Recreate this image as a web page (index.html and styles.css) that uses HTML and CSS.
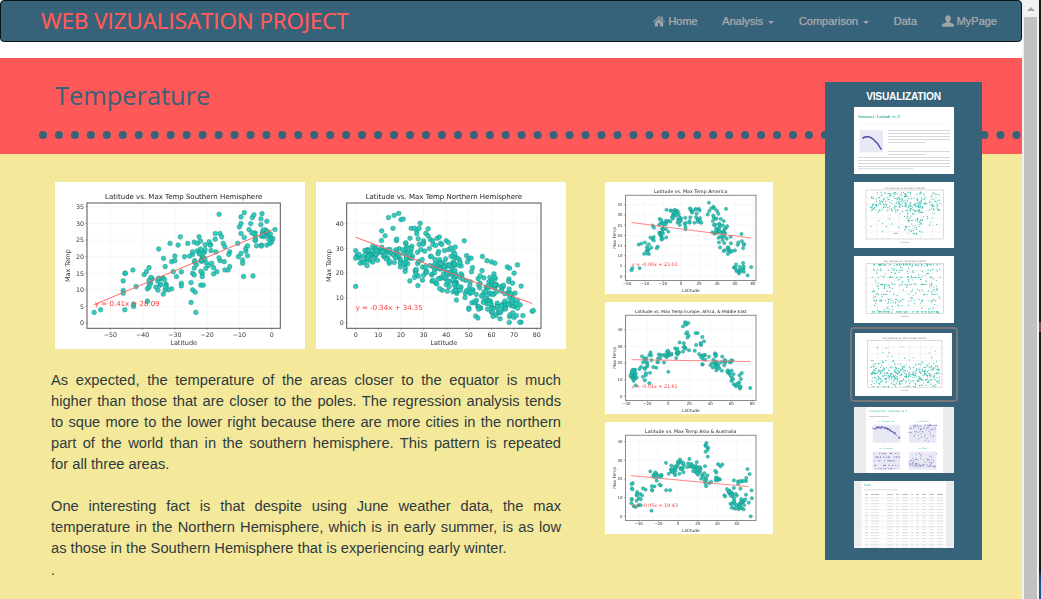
FILE: index.html
```html
<!DOCTYPE html>
<html lang="en">
<head>
<meta charset="utf-8">
<title>Temperature</title>
<link rel="stylesheet" href="styles.css">
</head>
<body>
<div class="page">
  <nav class="navbar">
    <a class="brand">WEB VIZUALISATION PROJECT</a>
    <ul class="nav-links">
      <li><svg class="nav-icon" viewBox="0 0 12 12"><path d="M6 1 0 6.6l.7.7L6 2.5l5.300 4.800.7-.7L9.700 4.500V1.600H8.300v1.600zM1.800 7.400V11.600h3.200V8.300h2v3.300h3.200V7.400L6 3.600z"/></svg>Home</li>
      <li>Analysis<span class="caret"></span></li>
      <li>Comparison<span class="caret"></span></li>
      <li>Data</li>
      <li><svg class="nav-icon" viewBox="0 0 12 12"><path d="M6 .3c-1.700 0-2.800 1.300-2.800 3.100 0 1.200.5 2.300 1.300 2.900v1L.8 8.800C.3 9 0 9.400 0 10v1.700h12V10c0-.6-.3-1-.8-1.200L7.500 7.300v-1c.8-.6 1.300-1.700 1.300-2.900C8.800 1.600 7.700.3 6 .3z"/></svg>MyPage</li>
    </ul>
  </nav>

  <header class="banner">
    <h1 class="banner-title">Temperature</h1>
    <hr class="dots">
  </header>

  <main class="content">
    <section class="left-col">
      <div class="chart-row">
        <div class="chart chart-big" data-chart="south"></div>
        <div class="chart chart-big" data-chart="north"></div>
      </div>
      <div class="copy">
        <p>As expected, the temperature of the areas closer to the equator is much higher than those that are closer to the poles. The regression analysis tends to sque more to the lower right because there are more cities in the northern part of the world than in the southern hemisphere. This pattern is repeated for&nbsp;all three areas.</p>
        <p>One interesting fact is that despite using June weather data, the max temperature in the Northern Hemisphere, which is in early summer, is as low as those in the Southern Hemisphere that is experiencing early winter.</p>
        <p class="stray">.</p>
      </div>
    </section>
    <section class="right-col">
      <div class="chart chart-small" data-chart="america"></div>
      <div class="chart chart-small" data-chart="europe"></div>
      <div class="chart chart-small" data-chart="asia"></div>
    </section>
  </main>

  <aside class="sidebar">
    <h2 class="sidebar-title">VISUALIZATION</h2>
    <div class="thumb" data-thumb="summary"></div>
    <div class="thumb" data-thumb="humidity"></div>
    <div class="thumb" data-thumb="cloud"></div>
    <div class="thumb thumb-active" data-thumb="wind"></div>
    <div class="thumb" data-thumb="compare"></div>
    <div class="thumb" data-thumb="table"></div>
  </aside>
</div>
<div class="scrollbar">
  <div class="track">
    <div class="arrow-box"><span class="arrow"></span></div>
    <div class="thumb-bar"></div>
  </div>
  <div class="behind"></div>
</div>
<script src="script.js"></script>
</body>
</html>
```

FILE: styles.css
```css
* { box-sizing: border-box; }
html, body { margin: 0; height: 599px; overflow: hidden; }
body {
  display: flex;
  background: #fff;
  font-family: "Liberation Sans", Arial, sans-serif;
  font-size: 14px;
  color: #333;
}
.page {
  position: relative;
  width: 1022px;
  height: 599px;
  display: flex;
  flex-direction: column;
}
.navbar {
  height: 42px;
  flex: none;
  display: flex;
  justify-content: space-between;
  align-items: center;
  background: #36627a;
  border: 1px solid #0c1418;
  border-radius: 4px;
  margin-bottom: 16px;
  padding: 0 24px 0 40px;
}
.brand {
  font-family: "Open Sans", sans-serif;
  font-size: 22.3px;
  color: #ff5a5a;
  text-shadow: 0 0 .5px #ff5a5a;
  position: relative;
  top: -1px;
}
.nav-links {
  list-style: none;
  display: flex;
  gap: 24.6px;
  margin: 0;
  padding: 0;
  font-size: 11px;
  color: #9fa5a9;
  text-shadow: 0 0 .7px #9fa5a9;
}
.nav-links li { display: flex; align-items: center; }
.nav-icon { width: 12px; height: 12px; margin-right: 3px; fill: #9fa5a9; }
.caret {
  width: 0;
  height: 0;
  margin-left: 5px;
  margin-top: 2px;
  border-top: 3px solid #9fa5a9;
  border-left: 3px solid transparent;
  border-right: 3px solid transparent;
}
.banner {
  height: 96px;
  flex: none;
  background: #ff5858;
  display: flex;
  flex-direction: column;
  padding-top: 19px;
}
.banner-title {
  margin: 0 0 0 55px;
  font-family: "Open Sans", sans-serif;
  font-weight: 400;
  font-size: 25.4px;
  line-height: 36px;
  color: #36627a;
}
.dots {
  margin: 18px 1px 0 39px;
  height: 0;
  border: 0;
  border-top: 8px dotted #36627a;
}
.content {
  flex: 1;
  background: #f4e99b;
  display: flex;
  padding: 28px 0 0 51px;
}
.left-col { width: 510px; }
.chart-row { display: flex; gap: 11px; margin-left: 4px; }
.chart { background: #fff; flex: none; }
.chart svg { display: block; }
.chart-big svg { filter: blur(.55px); }
.chart-small svg { filter: blur(.7px); }
.thumb svg { display: block; filter: blur(.45px); }
.chart-big { width: 250px; height: 167px; }
.chart-small { width: 168px; height: 112px; }
.copy { margin-top: 21px; }
.copy p {
  margin: 0 0 21px;
  font-size: 14.7px;
  line-height: 21px;
  text-align: justify;
  color: #2f3a40;
}
.copy .stray { margin: -21px 0 0; position: relative; top: 1px; }
.right-col {
  margin-left: 44px;
  display: flex;
  flex-direction: column;
  gap: 8px;
}
.sidebar {
  position: absolute;
  left: 825px;
  top: 82px;
  width: 157px;
  height: 478px;
  background: #36627a;
  display: flex;
  flex-direction: column;
  align-items: center;
  gap: 8px;
  padding-top: 25px;
}
.sidebar-title {
  position: absolute;
  top: 8px;
  left: 0;
  right: 0;
  margin: 0;
  text-align: center;
  font-size: 10.2px;
  letter-spacing: -.2px;
  line-height: 13px;
  font-weight: 700;
  color: #fff;
}
.thumb { width: 100px; height: 66.5px; background: #fff; flex: none; }
.thumb-active {
  width: 108px;
  height: 75px;
  margin: -4px 0 -3px;
  padding: 4px 3.500px;
  background: transparent;
  border: 2px solid #777;
  border-radius: 4px;
}
.thumb-active svg { background: #fff; }
.scrollbar { width: 19px; height: 599px; display: flex; flex: none; }
.track {
  width: 17px;
  background: #f1f1f1;
  display: flex;
  flex-direction: column;
  align-items: center;
}
.arrow-box { height: 17px; width: 100%; display: flex; justify-content: center; align-items: center; }
.arrow {
  width: 0;
  height: 0;
  border-bottom: 4px solid #a3a3a3;
  border-left: 4px solid transparent;
  border-right: 4px solid transparent;
}
.thumb-bar { width: 13px; flex: 1; background: #c1c1c1; }
.behind {
  width: 2px;
  background: linear-gradient(#1a1a1a 322px, #7a4a50 322px, #7a4a50 332px, #1a1a1a 332px, #1a1a1a 570px, #17568c 580px);
}
```

FILE: script.js
```js
(function () {
  var NS = 'http://www.w3.org/2000/svg';

  function rng(seed) {
    return function () {
      seed |= 0; seed = seed + 0x6D2B79F5 | 0;
      var t = Math.imul(seed ^ seed >>> 15, 1 | seed);
      t = t + Math.imul(t ^ t >>> 7, 61 | t) ^ t;
      return ((t ^ t >>> 14) >>> 0) / 4294967296;
    };
  }
  function gauss(r) { return (r() + r() + r() + r() - 2) * 1.7; }
  function el(parent, name, attrs, text) {
    var n = document.createElementNS(NS, name);
    for (var k in attrs) n.setAttribute(k, attrs[k]);
    if (text != null) n.textContent = text;
    parent.appendChild(n);
    return n;
  }
  function svg(host, w, h) {
    var s = el(host, 'svg', { width: w, height: h, viewBox: '0 0 ' + w + ' ' + h });
    return s;
  }
  function expand(points, clusters, seed) {
    var r = rng(seed), out = points.slice();
    clusters.forEach(function (c) {
      for (var i = 0; i < c[4]; i++) out.push([c[0] + gauss(r) * c[2], c[1] + gauss(r) * c[3]]);
    });
    return out;
  }

  var BIG = { w: 250, h: 167, r: 2.35, spine: '#555', sw: 1, tick: 6.3, lab: 6.5, ttl: 7, eqf: 7,
    titleY: 16.5, tickY: 155, labelY: 162.5, ylabX: 13, box: [32, 21, 225.300, 146.300] };
  var SMALL = { w: 168, h: 112, r: 1.65, spine: '#8a8a8a', sw: 1, tick: 3.9, lab: 4.3, ttl: 4.7, eqf: 4.8,
    titleY: 11.3, tickY: 103.300, labelY: 109.800, ylabX: 9.500, box: [20.500, 13.300, 151, 98.500] };

  var charts = {
    south: { base: BIG, title: 'Latitude vs. Max Temp Southern Hemisphere', x0: 216.700, xk: 3.228, y0: 141, yk: 3.314,
      xt: [-50, -40, -30, -20, -10, 0], yt: [0, 5, 10, 15, 20, 25, 30, 35],
      line: [[-55, 5.5], [0, 28.1]], eq: 'y = 0.41x + 28.09', eqx: 40, eqy: 123.700, seed: 11,
      pts: [[-55,3.2],[-53,4],[-46,12.7],[-46,9.8],[-46,9],[-45.5,15],[-45.3,15],[-45.5,4],[-43,16],[-42.8,5],[-42.8,5.7],[-42,11],[-39.5,14.6],[-38.8,15.5],[-38,16.7],[-38.5,10.3],[-38,10.8],[-37.5,12],[-38.5,6.6],[-37,13.3],[-35,22.3],[-33.5,19.5],[-33,17],[-31.5,24],[-31,18.5],[-30,18.8],[-30,20.2],[-29,23.5],[-28.3,26],[-28,15.4],[-28,12],[-28,11.2],[-29.5,14],[-30.5,15.5],[-27,20],[-26,24],[-24.5,20.7],[-25,12.2],[-24.5,15],[-24,14.5],[-24.5,10],[-23.7,9.3],[-25,6.2],[-23.5,3.2],[-22,11.4],[-21.2,11.4],[-21.5,15],[-21.5,14],[-18,14.8],[-17,15.5],[-18,16.7],[-16.3,32.8],[-17.5,27],[-16,27],[-15.5,26],[-17.5,25.3],[-16,18.8],[-14.7,18.5],[-14.5,16],[-13.5,16],[-13,17],[-13,21.5],[-13.3,20.7],[-10.5,24],[-10.3,20],[-9.5,21],[-9.5,27],[-10,29],[-9.5,30],[-9.5,32],[-8.5,33.3],[-9,19],[-9,18],[-8.7,14],[-8,21.7],[-8.5,25.800],[-8,22.5],[-7.5,23.3],[-7.5,20.3],[-7,28.2],[-6.5,30],[-6,31.8],[-5.5,32.6],[-5.8,14.2],[-3,33],[-5,26],[-5,25],[-4.7,23.3],[-3.2,23.5],[-3.2,23.2],[-1.5,30.7],[-1.5,23.5],[-0.5,24],[0,24.5],[-33,10],[-32,10],[-31,10.300],[-24,24.4],[-23,24],[-22.5,26],[-15,24],[-14.500,23]],
      clusters: [[-2.5,27.5,2,1.6,24],[-20.5,21,2,2,28],[-34.5,12.5,1.3,1.3,16],[-21,17,1.5,.8,5]] },
    north: { base: BIG, title: 'Latitude vs. Max Temp Northern Hemisphere', x0: 39.700, xk: 2.263, y0: 141, yk: 2.492,
      xt: [0, 10, 20, 30, 40, 50, 60, 70, 80], yt: [0, 10, 20, 30, 40], box: [30.700, 21, 225, 146.300],
      line: [[0, 34.4], [78, 7.8]], eq: 'y = -0.34x + 34.35', eqx: 39.700, eqy: 128, seed: 23,
      pts: [[0,14.7],[0,29],[0.5,27],[1,26.5],[2,24],[2,26],[5,23],[14.5,42.3],[17,43.2],[19,44],[20,41.5],[21,41.7],[16.5,38],[11.5,37],[13,35],[24.5,38],[26,38],[27,37],[28,38],[27,35.8],[28.5,40],[30,33],[30,32],[31,36],[32,35],[32,37.8],[33,33.5],[34,33],[36,34],[37,34.500],[37.5,32],[38,31.5],[40,33],[41,32.3],[44,30.5],[48,33],[49,27],[50,26],[51,26],[56,26.700],[58,25],[60,24.5],[61.5,24],[67,22.5],[68,22],[70,20],[71.5,23.300],[73,0.3],[72.5,0.3],[78,4.7],[78.5,5],[50,6],[50,5.5],[53,2.8],[54,2],[44.5,9.2],[43,12.5],[27.5,15],[29.5,17.2],[26,18.3],[26.5,20.5],[31,20.5],[18,33],[24,34],[22,32],[60,4.5],[62,3],[64,4.200],[68,2.500],[70,2.200],[71,3],[58,9],[60,6.500],[55,6],[53,8],[54,6.500]],
      clusters: [[6,27.5,3,1.8,32],[12,29,3.5,2,20],[20,27,4,3,34],[25,26,4,4,16],[35,23,5,3.5,26],[40,22,3.500,4,32],[44,22,3.500,4,24],[48,18,4.500,4,30],[55,14,5,4,28],[60,12,5,5,24],[66,7,3.500,3.200,34],[70,7,2.5,3,12],[63,16,3.500,2,12],[34,19,3,2,10]] },
    america: { base: SMALL, title: 'Latitude vs. Max Temp America', x0: 76, xk: 0.9, y0: 94.300, yk: 2.046,
      xt: [-60, -40, -20, 0, 20, 40, 60, 80], yt: [0, 5, 10, 15, 20, 25, 30, 35],
      line: [[-55, 26.3], [78, 18.7]], eq: 'y = -0.06x + 23.03', eqx: 26.700, eqy: 83.500, seed: 37,
      pts: [[-55,3],[-54,4],[-46,4],[-47,15.5],[-44,16],[-41,11],[-40,16.5],[-36,13],[-33,14],[-16,32.500],[78,4.5],[74,0.5],[69,6.5],[31,36],[36,34],[40,32],[50,33]],
      clusters: [[-38,13,2.5,2,7],[-26,20,4,2.5,16],[-18,24,3,2.5,14],[-22,25.5,3,1.5,6],[-9,31,3,1.500,12],[-6,28,4,2,12],[5,27,5,2.5,14],[17,31,4,1.5,10],[20,27.5,2,.8,6],[33,31,4,3,6],[42,24,4,3,30],[47,17,4,3,12],[55,13.5,4,2,10],[66,16,3,2.5,7],[62,3.500,3,1,10],[70,3,2,2,5]] },
    europe: { base: SMALL, ttl: 4.3, title: 'Latitude vs. Max Temp Europe, Africa, & Middle East', x0: 63.300, xk: 1.05, y0: 94.300, yk: 1.665,
      xt: [-40, -20, 0, 20, 40, 60, 80], yt: [0, 10, 20, 30, 40],
      line: [[-35, 22], [78, 20.9]], eq: 'y = -0.01x + 21.61', eqx: 26.700, eqy: 85.700, seed: 41,
      pts: [[-25,24],[0,14.7],[78,5],[34,33],[70,14],[14,42],[17,43],[19,44],[26,38],[28,38]],
      clusters: [[-33,13,1.5,2.5,25],[-22,16,4,3,15],[-20,23,3,1.5,8],[-10,20,3,2,6],[-3,24.5,3,.8,8],[6,26,4,1.5,16],[14,30,3,2,8],[16,38,3,3,6],[30,30,3,3,6],[32,25,3,1,4],[40,22,4,2,18],[47,17,4,1.5,10],[55,22,4,2,10],[58,15,3,1.5,6],[63,9,3,3,8],[68,7,2,1,8]] },
    asia: { base: SMALL, title: 'Latitude vs. Max Temp Asia & Australia', x0: 73, xk: 0.983, y0: 94.300, yk: 1.866,
      xt: [-40, -20, 0, 20, 40, 60], yt: [0, 10, 20, 30, 40],
      line: [[-48, 21.8], [72, 15.9]], eq: 'y = -0.05x + 19.43', eqx: 27, eqy: 85.300, seed: 53,
      pts: [[-27,3],[29,39.3],[74,0],[-45,5.500],[-43,5],[-47,15],[-47,9],[-12,14],[-8,14],[-40,6],[-38,6]],
      clusters: [[-47,12,.5,3,5],[-38,12,4,2,10],[-24,15,1.5,1,4],[-20,21,3,2,14],[-5,25,5,2.5,16],[3,27,4,1.5,18],[12,28,4,1.5,10],[22,25,4,1.5,16],[28,36,1.5,1.5,6],[28,19,3,2,10],[40,19,3,1,8],[41,26,3,1.2,5],[53,11,3,3,14],[58,7,4,2,14],[65,7,3,2,12],[62,17,4,2.5,8],[70,21,1.5,2,4],[72,10,2,1.5,5]] }
  };

  function minus(v) { return String(v).replace('-', '\u2212'); }

  function draw(host, c) {
    var b = c.base, box = c.box || b.box;
    var s = svg(host, b.w, b.h);
    var X = function (v) { return c.x0 + v * c.xk; };
    var Y = function (v) { return c.y0 - v * c.yk; };
    var font = 'DejaVu Sans';
    c.xt.forEach(function (v) {
      el(s, 'line', { x1: X(v), x2: X(v), y1: box[1], y2: box[3], stroke: '#efefef', 'stroke-width': .5 });
      el(s, 'line', { x1: X(v), x2: X(v), y1: box[3], y2: box[3] + 1.5, stroke: '#555', 'stroke-width': .5 });
      el(s, 'text', { x: X(v), y: b.tickY, 'text-anchor': 'middle', 'font-size': b.tick, 'font-family': font, fill: '#333' }, minus(v));
    });
    c.yt.forEach(function (v) {
      el(s, 'line', { x1: box[0], x2: box[2], y1: Y(v), y2: Y(v), stroke: '#efefef', 'stroke-width': .5 });
      el(s, 'line', { x1: box[0] - 1.500, x2: box[0], y1: Y(v), y2: Y(v), stroke: '#555', 'stroke-width': .5 });
      el(s, 'text', { x: box[0] - 3, y: Y(v) + b.tick * .36, 'text-anchor': 'end', 'font-size': b.tick, 'font-family': font, fill: '#333' }, v);
    });
    expand(c.pts, c.clusters, c.seed).forEach(function (p) {
      el(s, 'circle', { cx: X(p[0]), cy: Y(p[1]), r: b.r, fill: '#20c6b6', 'fill-opacity': .9, stroke: '#177f78', 'stroke-width': .4 });
    });
    el(s, 'line', { x1: X(c.line[0][0]), y1: Y(c.line[0][1]), x2: X(c.line[1][0]), y2: Y(c.line[1][1]), stroke: '#ff6666', 'stroke-width': b === BIG ? 1 : .8 });
    el(s, 'rect', { x: box[0], y: box[1], width: box[2] - box[0], height: box[3] - box[1], fill: 'none', stroke: b.spine, 'stroke-width': b.sw });
    el(s, 'text', { x: (box[0] + box[2]) / 2, y: b.titleY, 'text-anchor': 'middle', 'font-size': c.ttl || b.ttl, 'font-family': font, fill: '#222' }, c.title);
    el(s, 'text', { x: (box[0] + box[2]) / 2, y: b.labelY, 'text-anchor': 'middle', 'font-size': b.lab, 'font-family': font, fill: '#333' }, 'Latitude');
    var my = (box[1] + box[3]) / 2;
    el(s, 'text', { x: b.ylabX, y: my, 'text-anchor': 'middle', 'font-size': b.lab, 'font-family': font, fill: '#333', transform: 'rotate(-90 ' + b.ylabX + ' ' + my + ')', 'dominant-baseline': 'middle' }, 'Max Temp');
    el(s, 'text', { x: c.eqx, y: c.eqy, 'font-size': b.eqf, 'font-family': font, fill: '#ff3b3b' }, c.eq);
  }

  document.querySelectorAll('[data-chart]').forEach(function (h) { draw(h, charts[h.dataset.chart]); });

  /* sidebar page previews */
  function miniPlot(s, box, title, pts, color) {
    for (var i = 1; i < 7; i++) {
      var gx = box[0] + (box[2] - box[0]) * i / 7;
      var gy = box[1] + (box[3] - box[1]) * i / 7;
      el(s, 'line', { x1: gx, x2: gx, y1: box[1], y2: box[3], stroke: '#e4e4e4', 'stroke-width': .4 });
      el(s, 'line', { x1: box[0], x2: box[2], y1: gy, y2: gy, stroke: '#e4e4e4', 'stroke-width': .4 });
    }
    el(s, 'rect', { x: box[0], y: box[1], width: box[2] - box[0], height: box[3] - box[1], fill: 'none', stroke: '#c4c4c4', 'stroke-width': .6 });
    pts.forEach(function (p) {
      el(s, 'circle', { cx: box[0] + p[0] * (box[2] - box[0]), cy: box[1] + p[1] * (box[3] - box[1]), r: .6, fill: color });
    });
    if (title) el(s, 'text', { x: (box[0] + box[2]) / 2, y: box[1] - 1.2, 'text-anchor': 'middle', 'font-size': 2.4, 'font-family': 'DejaVu Sans', fill: '#777' }, title);
    el(s, 'text', { x: (box[0] + box[2]) / 2, y: box[3] + 3.5, 'text-anchor': 'middle', 'font-size': 2, 'font-family': 'DejaVu Sans', fill: '#888' }, 'Latitude');
  }
  function clamp(v) { return Math.max(.01, Math.min(.99, v)); }
  function gen(n, seed, fx) {
    var r = rng(seed), out = [];
    for (var i = 0; i < n; i++) out.push(fx(r));
    return out;
  }
  function lines(s, x1, x2, ys, color) {
    ys.forEach(function (y, i) {
      var end = i === ys.length - 1 ? x1 + (x2 - x1) * .6 : x2;
      el(s, 'rect', { x: x1, y: y, width: end - x1, height: .7, fill: color || '#c6c6cc' });
    });
  }
  var TEAL = '#33bfae', PURPLE = '#4a4aa0';
  var previews = {
    summary: function (s) {
      el(s, 'text', { x: 4, y: 11, 'font-size': 3.9, 'font-weight': 700, 'font-family': 'Liberation Serif', fill: '#45b5a5' }, 'Summary: Latitude vs. X');
      el(s, 'rect', { x: 4, y: 16.5, width: 92, height: .5, fill: '#eee' });
      el(s, 'rect', { x: 5.500, y: 23, width: 23.500, height: 22.500, fill: '#e9e9f5' });
      el(s, 'path', { d: 'M9 31Q14 28 19 32T27 42', fill: 'none', stroke: '#4a4aa0', 'stroke-width': 1.600, 'stroke-linecap': 'round' });
      lines(s, 34, 96, [23, 26, 29, 32, 35]);
      lines(s, 34, 96, [44, 47]);
      lines(s, 4, 96, [50, 53, 56, 59, 61.500]);
    },
    humidity: function (s) {
      var p = gen(360, 5, function (r) {
        var x = clamp(.06 + r() * .9), top = r() < .62;
        var y = top ? clamp(.04 + r() * .38) : clamp(.3 + r() * .62);
        if (!top && r() < .55) x = clamp(.62 + (r() - .5) * .25);
        return [x, y];
      });
      miniPlot(s, [12, 8, 89.300, 57], 'City Latitude vs. Humidity (06/20)', p, TEAL);
    },
    cloud: function (s) {
      var rows = [.97, .97, .97, .03, .03, .28, .42, .62, .75];
      var p = gen(360, 9, function (r) {
        var y = r() < .55 ? rows[Math.floor(r() * rows.length)] : clamp(r());
        return [clamp(.08 + r() * .88), y];
      });
      miniPlot(s, [12, 7.300, 89.300, 57.300], 'City Latitude vs. Cloudiness (06/20)', p, TEAL);
    },
    wind: function (s) {
      var p = gen(380, 13, function (r) {
        var y = r() < .95 ? clamp(.75 + gauss(r) * .13) : clamp(.1 + r() * .5);
        return [clamp(.05 + r() * .92), y];
      });
      miniPlot(s, [12.300, 7.700, 87, 55], 'City Latitude vs. Wind Speed (06/20)', p, TEAL);
    },
    compare: function (s) {
      el(s, 'rect', { x: 0, y: 0, width: 12, height: 66.500, fill: '#ececec' });
      el(s, 'rect', { x: 89, y: 0, width: 11, height: 66.500, fill: '#ececec' });
      el(s, 'text', { x: 15, y: 5, 'font-size': 2.9, 'font-family': 'DejaVu Sans', fill: '#45b5a5' }, 'Comparison: Latitude vs X');
      el(s, 'rect', { x: 15, y: 9, width: 20, height: .7, fill: '#bbb' });
      var seeds = [[18.700, 17.700, 'vs. Temperature', 1], [55, 17.700, 'vs. Humidity', 2], [18.700, 44.700, 'vs. Cloudiness', 3], [55, 44.700, 'vs. Wind', 4]];
      seeds.forEach(function (d) {
        var w = 27.500, h = 18;
        el(s, 'rect', { x: d[0], y: d[1], width: w, height: h, fill: '#e9e9f5' });
        el(s, 'text', { x: d[0] + w / 2, y: d[1] - 2.500, 'text-anchor': 'middle', 'font-size': 2, 'font-family': 'DejaVu Sans', fill: '#45b5a5' }, d[2]);
        gen(d[3] === 1 ? 90 : 70, d[3] * 7, function (r) {
          var x = r(), y;
          if (d[3] === 1) y = clamp(.25 - .2 * Math.sin(x * 3) + x * x * .55 + (r() - .5) * .1);
          else if (d[3] === 2) y = clamp(r() * r() * 1.1);
          else if (d[3] === 3) y = [.1, .3, .5, .75, .95][Math.floor(r() * 5)];
          else y = clamp(.85 - r() * r() * .9);
          return [x, y];
        }).forEach(function (p) {
          el(s, 'circle', { cx: d[0] + p[0] * w, cy: d[1] + p[1] * h, r: .5, fill: PURPLE, 'fill-opacity': .7 });
        });
      });
    },
    table: function (s) {
      el(s, 'rect', { x: 0, y: 0, width: 7.500, height: 66.500, fill: '#ececec' });
      el(s, 'rect', { x: 92, y: 0, width: 8, height: 66.500, fill: '#ececec' });
      el(s, 'text', { x: 10, y: 4.800, 'font-size': 3, 'font-family': 'DejaVu Sans', fill: '#45b5a5' }, 'Data');
      el(s, 'rect', { x: 10, y: 8.500, width: 34, height: .7, fill: '#ccc' });
      var cols = [[11, 3], [17, 8], [33, 6], [42, 3], [48, 6], [57, 2], [62, 3], [68, 4], [75, 5], [83, 6]];
      cols.forEach(function (c) { el(s, 'rect', { x: c[0], y: 13, width: c[1], height: .8, fill: '#aaa' }); });
      for (var y = 16.500, i = 0; y < 66; y += 2.900, i++) {
        if (i % 2 === 0) el(s, 'rect', { x: 9, y: y - .6, width: 82, height: 2.600, fill: '#f8f8f8' });
        cols.forEach(function (c) { el(s, 'rect', { x: c[0], y: y, width: c[1], height: .6, fill: '#d4d4d4' }); });
      }
    }
  };
  document.querySelectorAll('[data-thumb]').forEach(function (h) {
    var active = h.classList.contains('thumb-active');
    var s = el(h, 'svg', active
      ? { width: 97, height: 63, viewBox: '0 0 97 64', preserveAspectRatio: 'none' }
      : { width: 100, height: 66.500, viewBox: '0 0 100 66.500' });
    previews[h.dataset.thumb](s);
  });
})();
```
